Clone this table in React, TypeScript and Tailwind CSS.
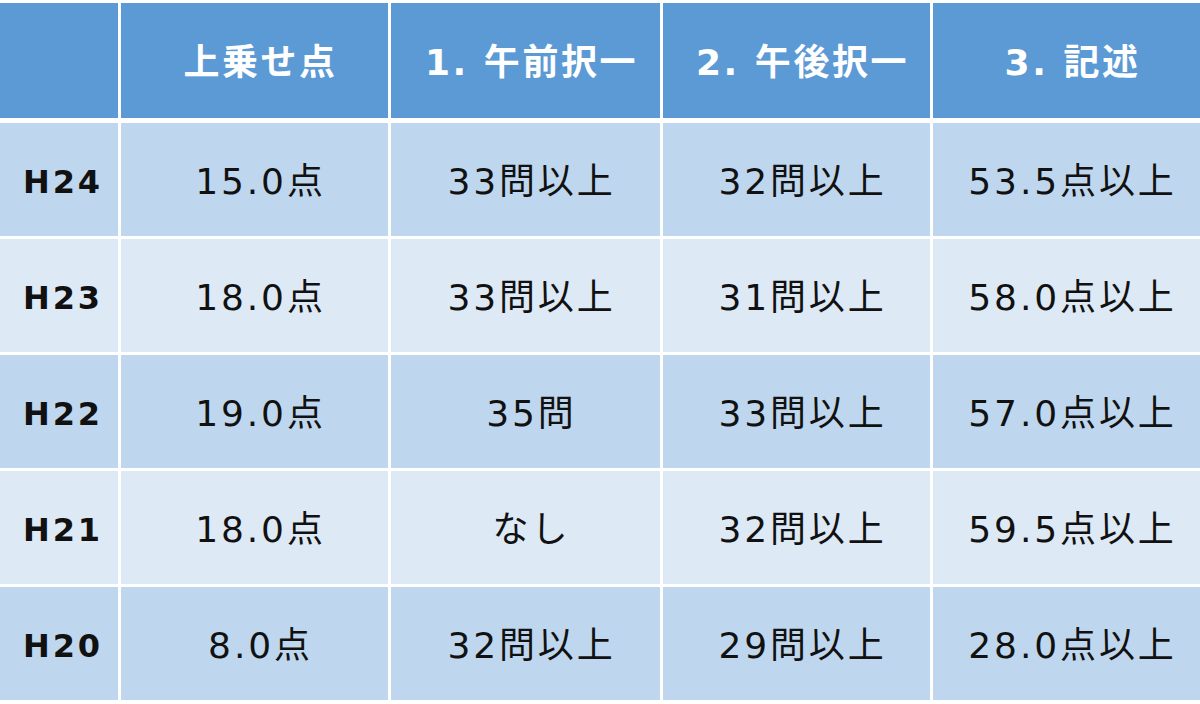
export default function App() {
  const header = ["", "上乗せ点", "1. 午前択一", "2. 午後択一", "3. 記述"];
  const rows = [
    ["H24", "15.0点", "33問以上", "32問以上", "53.5点以上"],
    ["H23", "18.0点", "33問以上", "31問以上", "58.0点以上"],
    ["H22", "19.0点", "35問", "33問以上", "57.0点以上"],
    ["H21", "18.0点", "なし", "32問以上", "59.5点以上"],
    ["H20", "8.0点", "32問以上", "29問以上", "28.0点以上"],
  ];
  const font = { fontFamily: '"DejaVu Sans", "Noto Sans CJK JP", sans-serif' };
  return (
    <div className="w-[1200px] h-[704px] bg-white pt-[3px] overflow-hidden" style={font}>
      <div className="grid grid-cols-[118px_267px_269px_267px_267px] gap-x-[3px]">
        {header.map((h, i) => (
          <div
            key={i}
            className="h-[115px] bg-[#5b9ad5] flex items-center justify-center pl-3 pt-1 text-white font-bold text-[36px] tracking-[0.07em]"
          >
            {h}
          </div>
        ))}
      </div>
      <div className="mt-[5px] flex flex-col gap-y-[3px]">
        {rows.map((r, ri) => (
          <div key={ri} className="grid grid-cols-[118px_267px_269px_267px_267px] gap-x-[3px]">
            {r.map((c, ci) => (
              <div
                key={ci}
                className={
                  "h-[113px] flex items-center justify-center pt-1 text-[#111111] " +
                  (ri % 2 === 0 ? "bg-[#bfd7ee] " : "bg-[#dee9f6] ") +
                  (ci === 0
                    ? "pl-2 font-bold text-[32px] tracking-[0.09em]"
                    : "pl-3 text-[36px] tracking-[0.08em]")
                }
              >
                {c}
              </div>
            ))}
          </div>
        ))}
      </div>
    </div>
  );
}
